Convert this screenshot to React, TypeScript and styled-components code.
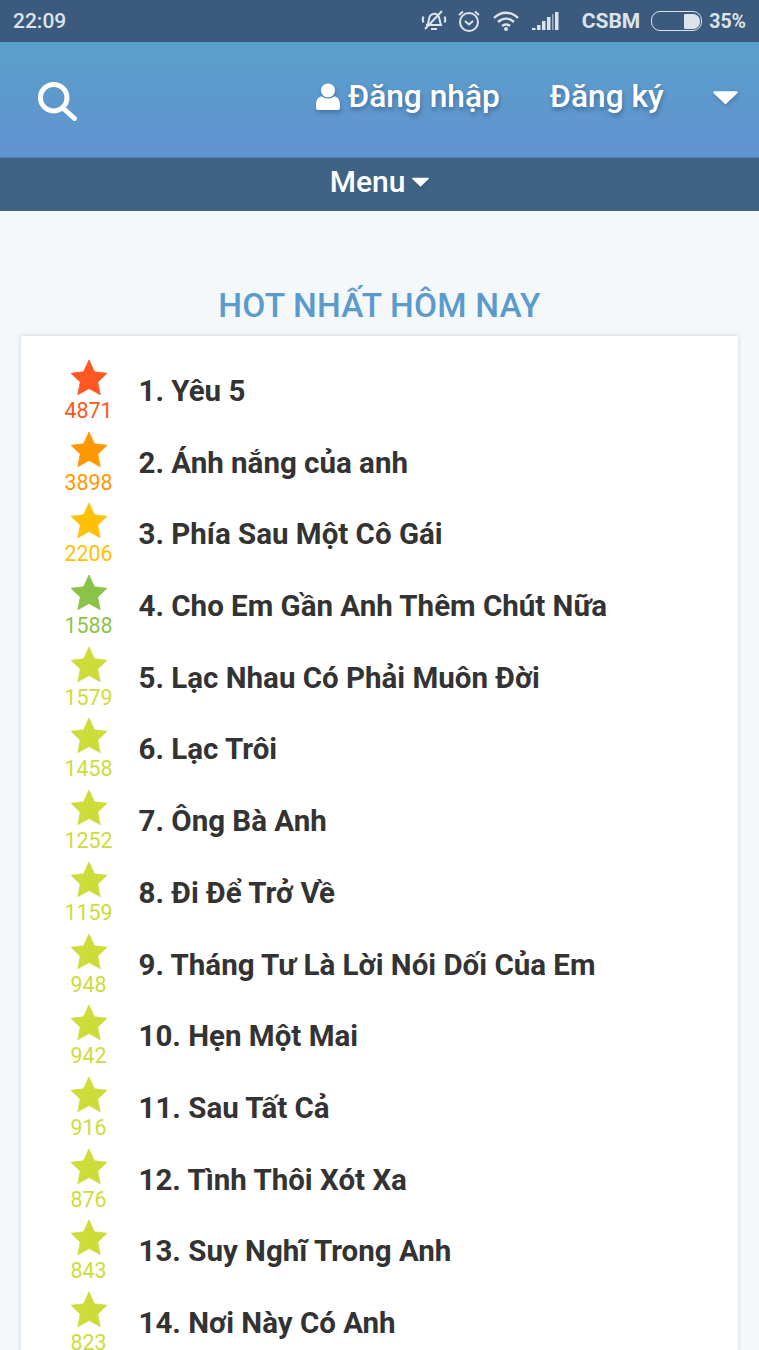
import React from "react";
import styled, { createGlobalStyle } from "styled-components";

const GlobalStyle = createGlobalStyle`
  html, body {
    margin: 0;
    padding: 0;
    height: 1350px;
    overflow: hidden;
    background: #f4f8fb;
    font-family: Roboto, "Liberation Sans", sans-serif;
  }
`;

const Page = styled.div`
  width: 759px;
  height: 1350px;
  overflow: hidden;
`;

const StatusBar = styled.div`
  height: 42px;
  background: #3c5a7e;
  color: #dde3ea;
  display: flex;
  align-items: center;
  padding: 0 13px;
  font-size: 21px;
  font-weight: 500;
`;

const StatusIcons = styled.div`
  margin-left: auto;
  display: flex;
  align-items: center;
`;

const StatusIcon = styled.svg<{ $gap: number }>`
  display: block;
  margin-left: ${(p) => p.$gap}px;
`;

const Carrier = styled.span`
  margin-left: 23px;
  font-size: 21px;
  font-weight: 700;
`;

const Battery = styled.div`
  width: 46px;
  height: 15px;
  margin-left: 11px;
  border: 1.5px solid #dde3ea;
  border-radius: 9px;
  display: flex;
  justify-content: flex-end;
  padding: 1.5px;
`;

const BatteryFill = styled.div`
  width: 16px;
  background: #dde3ea;
  border-radius: 1px 7px 7px 1px;
`;

const Percent = styled.span`
  margin-left: 7px;
  font-size: 19.5px;
  font-weight: 700;
`;

const TopBar = styled.header`
  height: 115px;
  background: linear-gradient(#5a9fcb, #6193cf);
  border-bottom: 1px solid #4f7fa8;
  display: flex;
  align-items: center;
  color: #fff;
  font-size: 31.7px;
  font-weight: 500;
  text-shadow: 1px 3px 4px rgba(40, 70, 110, 0.5);
  padding: 0 21px 0 37px;
`;

const SearchIcon = styled.svg`
  display: block;
`;

const AuthLink = styled.a<{ $gap: number }>`
  display: flex;
  align-items: center;
  margin-left: ${(p) => p.$gap}px;
  padding-bottom: 6px;
`;

const UserIcon = styled.svg`
  margin-right: 7px;
  filter: drop-shadow(1px 3px 2px rgba(40, 70, 110, 0.4));
`;

const CaretIcon = styled.svg<{ $push?: boolean }>`
  display: block;
  margin-left: ${(p) => (p.$push ? "auto" : "0")};
  margin-bottom: 4px;
  filter: drop-shadow(1px 2px 2px rgba(40, 70, 110, 0.35));
`;

const MenuBar = styled.nav`
  height: 53px;
  background: #3f6384;
  color: #fff;
  font-size: 30px;
  font-weight: 500;
  display: flex;
  align-items: center;
  justify-content: center;
  gap: 7px;
`;

const MenuLabel = styled.span`
  padding-bottom: 6px;
`;

const Title = styled.h2`
  margin: 0;
  padding-top: 74px;
  height: 51px;
  line-height: 42px;
  text-align: center;
  color: #5a9bcb;
  font-size: 33.5px;
  font-weight: 500;
  letter-spacing: 0.2px;
  box-sizing: content-box;
`;

const Card = styled.section`
  margin: 0 21px;
  background: #fff;
  box-shadow: 0 0 5px rgba(90, 110, 140, 0.28);
  border-radius: 2px;
  padding-top: 24px;
  height: 1100px;
`;

const Row = styled.div`
  height: 71.7px;
  display: flex;
`;

const Rank = styled.div<{ $color: string }>`
  width: 50px;
  margin-left: 42.5px;
  display: flex;
  flex-direction: column;
  align-items: center;
  color: ${(p) => p.$color};
  font-size: 21.4px;
  line-height: 24px;
  font-weight: 400;
`;

const Star = styled.svg`
  width: 36px;
  height: 35px;
  display: block;
  margin-bottom: 4px;
`;

const SongName = styled.div`
  margin-left: 25px;
  color: #333;
  font-size: 29.5px;
  font-weight: 700;
  line-height: 62px;
  height: 62px;
`;

const songs: [string, number, string][] = [
  ["1. Yêu 5", 4871, "#ff5722"],
  ["2. Ánh nắng của anh", 3898, "#ff9800"],
  ["3. Phía Sau Một Cô Gái", 2206, "#ffc107"],
  ["4. Cho Em Gần Anh Thêm Chút Nữa", 1588, "#8bc34a"],
  ["5. Lạc Nhau Có Phải Muôn Đời", 1579, "#cddc39"],
  ["6. Lạc Trôi", 1458, "#cddc39"],
  ["7. Ông Bà Anh", 1252, "#cddc39"],
  ["8. Đi Để Trở Về", 1159, "#cddc39"],
  ["9. Tháng Tư Là Lời Nói Dối Của Em", 948, "#cddc39"],
  ["10. Hẹn Một Mai", 942, "#cddc39"],
  ["11. Sau Tất Cả", 916, "#cddc39"],
  ["12. Tình Thôi Xót Xa", 876, "#cddc39"],
  ["13. Suy Nghĩ Trong Anh", 843, "#cddc39"],
  ["14. Nơi Này Có Anh", 823, "#cddc39"],
];

const Caret = ({ w, push }: { w: number; push?: boolean }) => (
  <CaretIcon $push={push} width={w} height={w * 0.6} viewBox="0 0 20 12">
    <path d="M1 1h18a.8.8 0 0 1 .6 1.3L10.6 11a.8.8 0 0 1-1.2 0L.4 2.3A.8.8 0 0 1 1 1z" fill="#fff" />
  </CaretIcon>
);

const App = () => {
  return (
    <Page>
      <GlobalStyle />
      <StatusBar>
        22:09
        <StatusIcons>
          <StatusIcon $gap={0} width="26" height="24" viewBox="0 0 26 24" fill="none" stroke="#dde3ea" strokeWidth="2">
            <path d="M6 16c2-2 1.500-5 2.500-8 1-3 6-4.500 8.500-1.500 2 2.500 1.500 6 3 9.500H5" />
            <path d="M4 20 21 2M10 20h6M2.500 7.500c-1 2-1 4 0 6M23.500 7.500c1 2 1 4 0 6" />
          </StatusIcon>
          <StatusIcon $gap={10} width="24" height="24" viewBox="0 0 24 24" fill="none" stroke="#dde3ea" strokeWidth="2">
            <circle cx="12" cy="13" r="9" />
            <path d="M8 12l4 3.500 4-3.500M2 6l4-3.500M22 6l-4-3.500" />
          </StatusIcon>
          <StatusIcon $gap={11} width="28" height="22" viewBox="0 0 28 22" fill="none" stroke="#dde3ea" strokeWidth="2.400">
            <path d="M2 8c7-7 17-7 24 0M6 12c5-4.500 11-4.500 16 0M10 16c2.500-2 5.500-2 8 0" />
            <circle cx="14" cy="19" r="2" fill="#dde3ea" stroke="none" />
          </StatusIcon>
          <StatusIcon $gap={12} width="27" height="18" viewBox="0 0 27 18" fill="#dde3ea">
            <path d="M0 18v-2h3.500v2zM5 18v-5h3.500v5zM10 18v-9h3.500v9zM15 18V5h3.500v13zM23 18V0h3.500v18z" />
            <path d="M20 18V2h1.500v16z" opacity=".6" />
          </StatusIcon>
          <Carrier>CSBM</Carrier>
          <Battery>
            <BatteryFill />
          </Battery>
          <Percent>35%</Percent>
        </StatusIcons>
      </StatusBar>
      <TopBar>
        <SearchIcon width="42" height="42" viewBox="0 0 42 42" fill="none" stroke="#fff">
          <circle cx="16.700" cy="18.700" r="13.250" strokeWidth="5" />
          <path d="M27 30l10.500 9.500" strokeWidth="5" strokeLinecap="round" />
        </SearchIcon>
        <AuthLink $gap={236}>
          <UserIcon width="26" height="29" viewBox="0 0 26 29" fill="#fff">
            <circle cx="13" cy="8.500" r="7" />
            <path d="M1 23c0-6 3-8.500 6-8.500 2 1.500 4 2 6 2s4-.5 6-2c3 0 6 2.500 6 8.500v2.500a2.500 2.500 0 0 1-2.500 2.500h-19A2.500 2.500 0 0 1 1 25.500z" />
          </UserIcon>
          Đăng nhập
        </AuthLink>
        <AuthLink $gap={50}>Đăng ký</AuthLink>
        <Caret w={25} push />
      </TopBar>
      <MenuBar>
        <MenuLabel>Menu</MenuLabel>
        <Caret w={17} />
      </MenuBar>
      <Title>HOT NHẤT HÔM NAY</Title>
      <Card>
        {songs.map(([name, count, color]) => (
          <Row key={name}>
            <Rank $color={color}>
              <Star viewBox="0 0 36 35">
                <path
                  d="M18 0l5.400 11.800 12.600 1.500-9.300 8.700 2.500 12.700L18 28.500 6.800 34.700l2.500-12.700L0 13.300l12.600-1.500z"
                  fill={color}
                  stroke={color}
                  strokeWidth="0.8"
                  strokeLinejoin="round"
                />
              </Star>
              {count}
            </Rank>
            <SongName>{name}</SongName>
          </Row>
        ))}
      </Card>
    </Page>
  );
};

export default App;
